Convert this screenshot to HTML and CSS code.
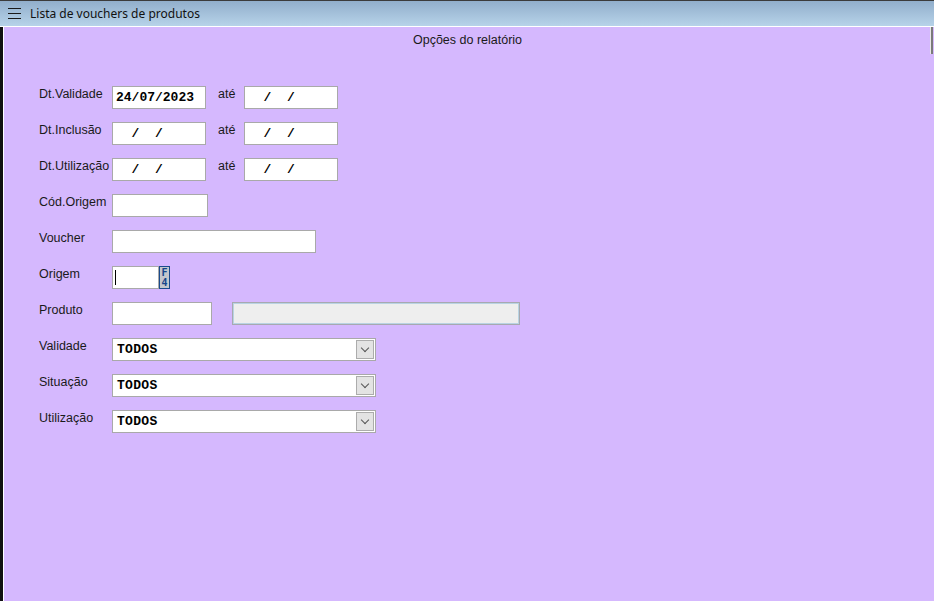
FILE: index.html
```html
<!DOCTYPE html>
<html lang="pt-BR">
<head>
<meta charset="utf-8">
<title>Lista de vouchers de produtos</title>
<link rel="stylesheet" href="styles.css">
</head>
<body>
<div class="window">
  <header class="titlebar">
    <svg class="menu-icon" width="14" height="12" viewBox="0 0 14 12" aria-hidden="true">
      <rect x="0" y="0" width="13" height="1" fill="#1a1a1a"/>
      <rect x="0" y="5" width="13" height="1" fill="#1a1a1a"/>
      <rect x="0" y="10" width="13" height="1" fill="#1a1a1a"/>
    </svg>
    <span class="title">Lista de vouchers de produtos</span>
  </header>

  <main class="panel">
    <div class="caption">Opções do relatório</div>
    <span class="grip"></span>

    <form class="form">
      <div class="row">
        <label class="lbl">Dt.Validade</label>
        <span class="field date">24/07/2023</span>
        <span class="ate">até</span>
        <span class="field date">  /  /</span>
      </div>
      <div class="row">
        <label class="lbl">Dt.Inclusão</label>
        <span class="field date">  /  /</span>
        <span class="ate">até</span>
        <span class="field date">  /  /</span>
      </div>
      <div class="row">
        <label class="lbl">Dt.Utilização</label>
        <span class="field date">  /  /</span>
        <span class="ate">até</span>
        <span class="field date">  /  /</span>
      </div>
      <div class="row">
        <label class="lbl">Cód.Origem</label>
        <span class="field w-cod"></span>
      </div>
      <div class="row">
        <label class="lbl">Voucher</label>
        <span class="field w-voucher"></span>
      </div>
      <div class="row">
        <label class="lbl">Origem</label>
        <span class="field w-origem"><span class="caret"></span></span>
        <span class="fkey"><span>F</span><span>4</span></span>
      </div>
      <div class="row">
        <label class="lbl">Produto</label>
        <span class="field w-produto"></span>
        <span class="field disabled"></span>
      </div>
      <div class="row">
        <label class="lbl">Validade</label>
        <span class="select"><span class="value">TODOS</span><span class="arrow"></span></span>
      </div>
      <div class="row">
        <label class="lbl">Situação</label>
        <span class="select"><span class="value">TODOS</span><span class="arrow"></span></span>
      </div>
      <div class="row">
        <label class="lbl">Utilização</label>
        <span class="select"><span class="value">TODOS</span><span class="arrow"></span></span>
      </div>
    </form>
  </main>
</div>
</body>
</html>
```
FILE: styles.css
```css
* { box-sizing: border-box; }

html, body {
  margin: 0;
  height: 100%;
}

body {
  font-family: "Liberation Sans", Arial, sans-serif;
  font-size: 12px;
  color: #1a1a1a;
  background: #d5b8fe;
}

.window {
  display: flex;
  flex-direction: column;
  height: 100vh;
}

/* window title bar */
.titlebar {
  height: 27px;
  flex: none;
  display: flex;
  align-items: center;
  border-top: 1px solid #3b3b3b;
  border-bottom: 1px solid #ffffff;
  background: linear-gradient(#91aecb, #b7d3e9);
  padding-left: 8px;
}

.menu-icon {
  margin-top: 1px;
  margin-right: 8px;
}

.title {
  font-family: "Noto Sans", "Liberation Sans", sans-serif;
  font-size: 12px;
  color: #111;
  margin-top: -1px;
}

/* purple form panel */
.panel {
  flex: 1;
  position: relative;
  background: #d5b8fe;
  border-left: 3px solid #111;
  box-shadow: inset 1px 0 0 #ffffff;
}

.caption {
  text-align: center;
  padding-top: 6px;
  line-height: 14px;
  padding-right: 2px;
  font-size: 12.5px;
}

.grip {
  position: absolute;
  top: 0;
  right: 1px;
  width: 3px;
  height: 27px;
  background: #7a7a7a;
  border-left: 1px solid #e8e8e8;
}

.form {
  display: flex;
  flex-direction: column;
  gap: 13px;
  padding: 39px 0 0 36px;
}

.row {
  display: flex;
  align-items: flex-start;
  height: 23px;
}

.lbl {
  width: 73px;
  flex: none;
  padding-top: 1px;
  line-height: 14px;
  font-size: 12.5px;
  white-space: nowrap;
}

.ate {
  width: 38px;
  padding-left: 12px;
  line-height: 14px;
  padding-top: 1px;
  font-size: 12.5px;
}

.field {
  display: block;
  height: 23px;
  background: #ffffff;
  border: 1px solid #a9a9a9;
  font-family: "Liberation Mono", "DejaVu Sans Mono", monospace;
  font-weight: bold;
  font-size: 13px;
  line-height: 21px;
  padding-left: 3px;
  white-space: pre;
  color: #000;
}

.date { width: 94px; }
.w-cod { width: 96px; }
.w-voucher { width: 204px; }
.w-origem { width: 47px; position: relative; }
.w-produto { width: 100px; }

.disabled {
  width: 288px;
  margin-left: 20px;
  background: #eeeeee;
  border: 1px solid #a7a9b0;
  box-shadow: inset 0 0 0 1px #b9d3e3;
}

.caret {
  position: absolute;
  left: 2px;
  top: 3px;
  width: 1px;
  height: 15px;
  background: #000;
}

/* F4 lookup key */
.fkey {
  width: 11px;
  height: 23px;
  display: flex;
  flex-direction: column;
  align-items: center;
  justify-content: center;
  background: #c3c7cc;
  border: 1px solid #1a4b8c;
  font-family: "DejaVu Sans Mono", "Liberation Mono", monospace;
  font-weight: 900;
  font-size: 10px;
  line-height: 10px;
  color: #15468a;
}

/* drop-down lists */
.select {
  display: flex;
  align-items: center;
  justify-content: space-between;
  width: 264px;
  height: 23px;
  background: #fff;
  border: 1px solid #a9a9a9;
  padding: 0 1px 0 4px;
}

.value {
  font-family: "Liberation Mono", "DejaVu Sans Mono", monospace;
  font-weight: bold;
  font-size: 13px;
  letter-spacing: 0.3px;
  color: #000;
}

.arrow {
  width: 18px;
  height: 19px;
  background: #e3e3e3;
  border: 1px solid #acacac;
  position: relative;
}

.arrow::after {
  content: "";
  position: absolute;
  left: 5px;
  top: 4px;
  width: 5px;
  height: 5px;
  border-right: 1px solid #555;
  border-bottom: 1px solid #555;
  transform: rotate(45deg);
}
```
